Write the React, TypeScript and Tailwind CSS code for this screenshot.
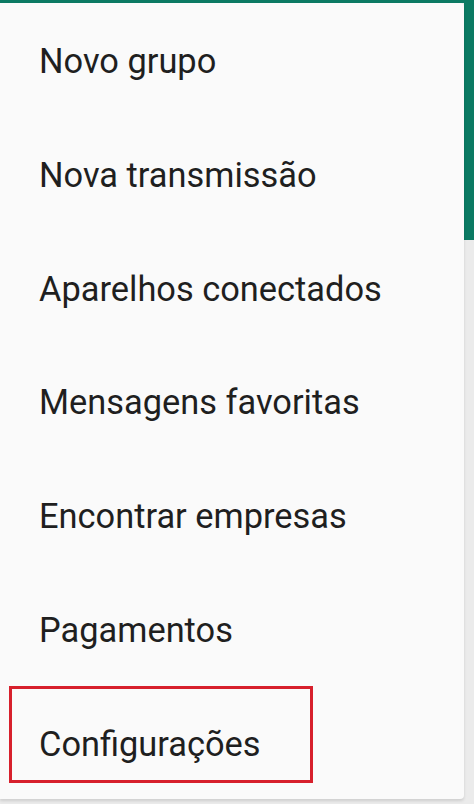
const items = [
  'Novo grupo',
  'Nova transmissão',
  'Aparelhos conectados',
  'Mensagens favoritas',
  'Encontrar empresas',
  'Pagamentos',
  'Configurações',
]

export default function App() {
  return (
    <div className="w-[474px] h-[804px] bg-[#ebebeb] flex flex-col overflow-hidden" style={{ fontFamily: 'Roboto, sans-serif' }}>
      <div className="h-[3px] bg-[#0b7a63] shrink-0" />
      <div className="flex flex-1 min-h-0">
        <div className="relative w-[464px] h-[796px] bg-[#fafafa] rounded-tr-[4px] rounded-br-[4px] shadow-[0_2px_3px_rgba(0,0,0,0.12)] pt-[2px]">
          {items.map((label) => (
            <div key={label} className="h-[113.8px] flex items-center pl-[39px] text-[34.4px] text-[#1f1f1f]">
              {label}
            </div>
          ))}
          <div className="absolute left-[9px] top-[683px] w-[304px] h-[97px] border-[3px] border-[#d7202c]" />
        </div>
        <div className="w-[10px] h-[237px] bg-[#0b7a63]" />
      </div>
    </div>
  )
}
